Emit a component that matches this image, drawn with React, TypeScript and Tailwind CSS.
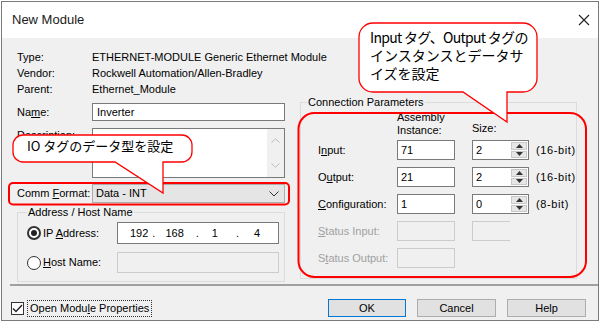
import React from "react";

function InfoRow({ label, value }: { label: string; value: string }) {
  return (
    <div className="flex h-[16px] items-center whitespace-nowrap">
      <span className="w-[75px] shrink-0">{label}</span>
      <span>{value}</span>
    </div>
  );
}

function Spinner({ value }: { value: string }) {
  return (
    <div className="flex h-full w-[57px] border border-[#7a7a7a] bg-white">
      <span className="flex-1 pl-[3px] leading-[18px]">{value}</span>
      <div className="flex w-[18px] flex-col gap-px bg-white p-px">
        <div className="flex flex-1 items-center justify-center border border-[#c8c8c8] bg-[#e6e6e6]">
          <svg width="7" height="4" viewBox="0 0 7 4">
            <path d="M0 4L3.5 0L7 4Z" fill="#333" />
          </svg>
        </div>
        <div className="flex flex-1 items-center justify-center border border-[#c8c8c8] bg-[#e6e6e6]">
          <svg width="7" height="4" viewBox="0 0 7 4">
            <path d="M0 0L3.5 4L7 0Z" fill="#333" />
          </svg>
        </div>
      </div>
    </div>
  );
}

function ParamRow({
  label,
  u,
  rest,
  instance,
  size,
  unit,
  disabled,
  sizeBox,
}: {
  label: string;
  u: string;
  rest: string;
  instance?: string;
  size?: string;
  unit?: string;
  disabled?: boolean;
  sizeBox?: "spin" | "open" | "none";
}) {
  return (
    <div className="flex h-[20px] items-center whitespace-nowrap">
      <span className={`w-[90px] shrink-0 pl-[11px] ${disabled ? "text-[#a0a0a0]" : ""}`}>
        {label}
        <span className="underline">{u}</span>
        {rest}
      </span>
      {disabled ? (
        <div className="h-full w-[58px] border border-[#cccccc]" />
      ) : (
        <div className="h-full w-[58px] border border-[#7a7a7a] bg-white pl-[3px] leading-[18px]">{instance}</div>
      )}
      {sizeBox === "spin" && (
        <div className="ml-[17px] h-full">
          <Spinner value={size ?? ""} />
        </div>
      )}
      {sizeBox === "open" && <div className="ml-[17px] h-full w-[38px] border border-r-0 border-[#cccccc]" />}
      {unit && <span className="ml-[7px] tracking-[0.6px]">{unit}</span>}
    </div>
  );
}

export default function App() {
  return (
    <div className="relative h-[325px] w-[600px] overflow-hidden bg-white font-['Liberation_Sans',Arial,sans-serif] text-[11px] text-black">
      <div className="ml-px mt-px flex h-[320px] w-[598px] flex-col border border-[#7a7a7a] bg-[#f0f0f0]">
        <div className="flex h-[36px] shrink-0 items-center justify-between bg-white pl-[10px] pr-[8px]">
          <span className="text-[13px] text-[#1a1a1a]">New Module</span>
          <svg width="12" height="12" viewBox="0 0 12 12">
            <path d="M1 1L11 11M11 1L1 11" stroke="#222" strokeWidth="1.1" />
          </svg>
        </div>

        <div className="flex flex-1 flex-col">
          <div className="pl-[15px] pt-[11px]">
            <InfoRow label="Type:" value="ETHERNET-MODULE Generic Ethernet Module" />
            <InfoRow label="Vendor:" value="Rockwell Automation/Allen-Bradley" />
            <InfoRow label="Parent:" value="Ethernet_Module" />

            <div className="flex gap-[15px]">
              {/* left column */}
              <div className="flex w-[268px] flex-col">
                <div className="mt-[6px] flex h-[18px] items-center">
                  <span className="w-[75px] shrink-0">
                    Na<span className="underline">m</span>e:
                  </span>
                  <div className="h-full w-[193px] border border-[#7a7a7a] bg-white pl-[4px] leading-[16px]">Inverter</div>
                </div>

                <div className="mt-[7px] flex h-[50px]">
                  <span className="-mt-[1px] w-[75px] shrink-0">Description:</span>
                  <div className="flex w-[193px] border border-[#7a7a7a] bg-white">
                    <div className="flex-1" />
                    <div className="flex w-[17px] flex-col items-center justify-between bg-[#f0f0f0] py-[9px]">
                      <svg width="9" height="5" viewBox="0 0 9 5">
                        <path d="M0.5 4.5L4.5 0.8L8.5 4.5" stroke="#bdbdbd" fill="none" />
                      </svg>
                      <svg width="9" height="5" viewBox="0 0 9 5">
                        <path d="M0.5 0.5L4.5 4.2L8.5 0.5" stroke="#bdbdbd" fill="none" />
                      </svg>
                    </div>
                  </div>
                </div>

                <div className="mt-[6px] flex h-[19px] items-center">
                  <span className="w-[75px] shrink-0 whitespace-nowrap">
                    Comm <span className="underline">F</span>ormat:
                  </span>
                  <div className="flex h-full w-[193px] items-center justify-between border border-[#adadad] bg-[#e5e5e5] pl-[3px] pr-[5px]">
                    <span>Data - INT</span>
                    <svg width="10" height="6" viewBox="0 0 10 6">
                      <path d="M0.5 0.5L5 5L9.5 0.5" stroke="#333" fill="none" />
                    </svg>
                  </div>
                </div>

                <fieldset className="mt-[2px] border border-[#dcdcdc] pb-[8px] pl-[9px] pr-[5px]">
                  <legend className="px-[1px] leading-[14px]">Address / Host Name</legend>
                  <div className="mt-[3px] flex h-[22px] items-center">
                    <div className="flex h-[14px] w-[14px] items-center justify-center rounded-full border-2 border-[#333] bg-white">
                      <div className="h-[6px] w-[6px] rounded-full bg-[#222]" />
                    </div>
                    <span className="ml-[2px] flex-1">
                      IP <span className="underline">A</span>ddress:
                    </span>
                    <div className="flex h-full w-[162px] items-center border border-[#7a7a7a] bg-white">
                      <span className="ml-[12px]">192</span>
                      <span className="ml-[4px]">.</span>
                      <span className="ml-[10px]">168</span>
                      <span className="ml-[12px]">.</span>
                      <span className="ml-[13px]">1</span>
                      <span className="ml-[18px]">.</span>
                      <span className="ml-[15px]">4</span>
                    </div>
                  </div>
                  <div className="mt-[8px] flex h-[21px] items-center">
                    <div className="h-[14px] w-[14px] rounded-full border border-[#333] bg-white" />
                    <span className="ml-[2px] flex-1">
                      <span className="underline">H</span>ost Name:
                    </span>
                    <div className="h-full w-[162px] border border-[#cccccc]" />
                  </div>
                </fieldset>
              </div>

              {/* right column */}
              <fieldset className="-mt-[2px] w-[277px] self-start border border-[#dcdcdc] pb-[10px] pl-[6px]">
                <legend className="px-[1px] leading-[14px]">Connection Parameters</legend>
                <div className="flex h-[31px]">
                  <div className="w-[90px] shrink-0" />
                  <div className="w-[58px] pt-[2px] leading-[13px]">
                    <div>Assembly</div>
                    <div>Instance:</div>
                  </div>
                  <div className="ml-[17px] self-end pb-[5px] leading-[13px]">Size:</div>
                </div>
                <div className="flex flex-col gap-[7px] overflow-hidden">
                  <ParamRow label="I" u="n" rest="put:" instance="71" size="2" unit="(16-bit)" sizeBox="spin" />
                  <ParamRow label="O" u="u" rest="tput:" instance="21" size="2" unit="(16-bit)" sizeBox="spin" />
                  <ParamRow label="" u="C" rest="onfiguration:" instance="1" size="0" unit="(8-bit)" sizeBox="spin" />
                  <ParamRow label="" u="S" rest="tatus Input:" disabled sizeBox="open" />
                  <ParamRow label="S" u="t" rest="atus Output:" disabled sizeBox="none" />
                </div>
              </fieldset>
            </div>
          </div>

          <div className="ml-[8px] mt-[2px] h-[2px] bg-[#a0a0a0]" />

          <div className="mt-[13px] flex h-[18px] items-center pl-[9px] pr-[12px]">
            <div className="flex h-[13px] w-[13px] items-center justify-center border border-[#333] bg-white">
              <svg width="11" height="9" viewBox="0 0 11 9">
                <path d="M1 4.5L4 7.5L10 1" stroke="#222" strokeWidth="1.4" fill="none" />
              </svg>
            </div>
            <span className="ml-[3px] border border-dotted border-[#333] px-[2px] leading-[15px]">
              Open Modu<span className="underline">l</span>e Properties
            </span>
            <div className="ml-auto flex gap-[11px]">
              <button className="h-[18px] w-[78px] border border-[#0078d7] bg-[#e1e1e1]">OK</button>
              <button className="h-[18px] w-[79px] border border-[#adadad] bg-[#e1e1e1]">Cancel</button>
              <button className="h-[18px] w-[79px] border border-[#adadad] bg-[#e1e1e1]">Help</button>
            </div>
          </div>
        </div>
      </div>

      {/* annotations */}
      <svg className="pointer-events-none absolute left-0 top-0" width="600" height="325" viewBox="0 0 600 325">
        <rect x="9" y="183" width="280" height="21.5" rx="4" fill="none" stroke="#ff0000" strokeWidth="2" />
        <rect x="298.5" y="113" width="287.5" height="164" rx="16" fill="none" stroke="#ff0000" strokeWidth="2" />
        <path
          d="M23 135H182A10 10 0 0 1 192 145V152A10 10 0 0 1 182 162H163V193L115 162H23A10 10 0 0 1 13 152V145A10 10 0 0 1 23 135Z"
          fill="#ffffff"
          stroke="#ff0000"
          strokeWidth="1.3"
        />
        <path
          d="M373 23H523A14 14 0 0 1 537 37V78A14 14 0 0 1 523 92H507V122L463 92H373A14 14 0 0 1 359 78V37A14 14 0 0 1 373 23Z"
          fill="#ffffff"
          stroke="#ff0000"
          strokeWidth="1.3"
        />
      </svg>
      <div className="absolute left-[27px] top-[138px] whitespace-nowrap font-['Noto_Sans_CJK_JP',sans-serif] text-[13px] leading-[16px]">
        IO タグのデータ型を設定
      </div>
      <div className="absolute left-[370px] top-[28px] flex flex-col whitespace-nowrap font-['Noto_Sans_CJK_JP',sans-serif] text-[14px] leading-[18px]">
        <div className="h-[18px] tracking-[-0.7px]">Input タグ、Output タグの</div>
        <div className="h-[18px]">インスタンスとデータサ</div>
        <div className="h-[18px]">イズを設定</div>
      </div>
    </div>
  );
}
